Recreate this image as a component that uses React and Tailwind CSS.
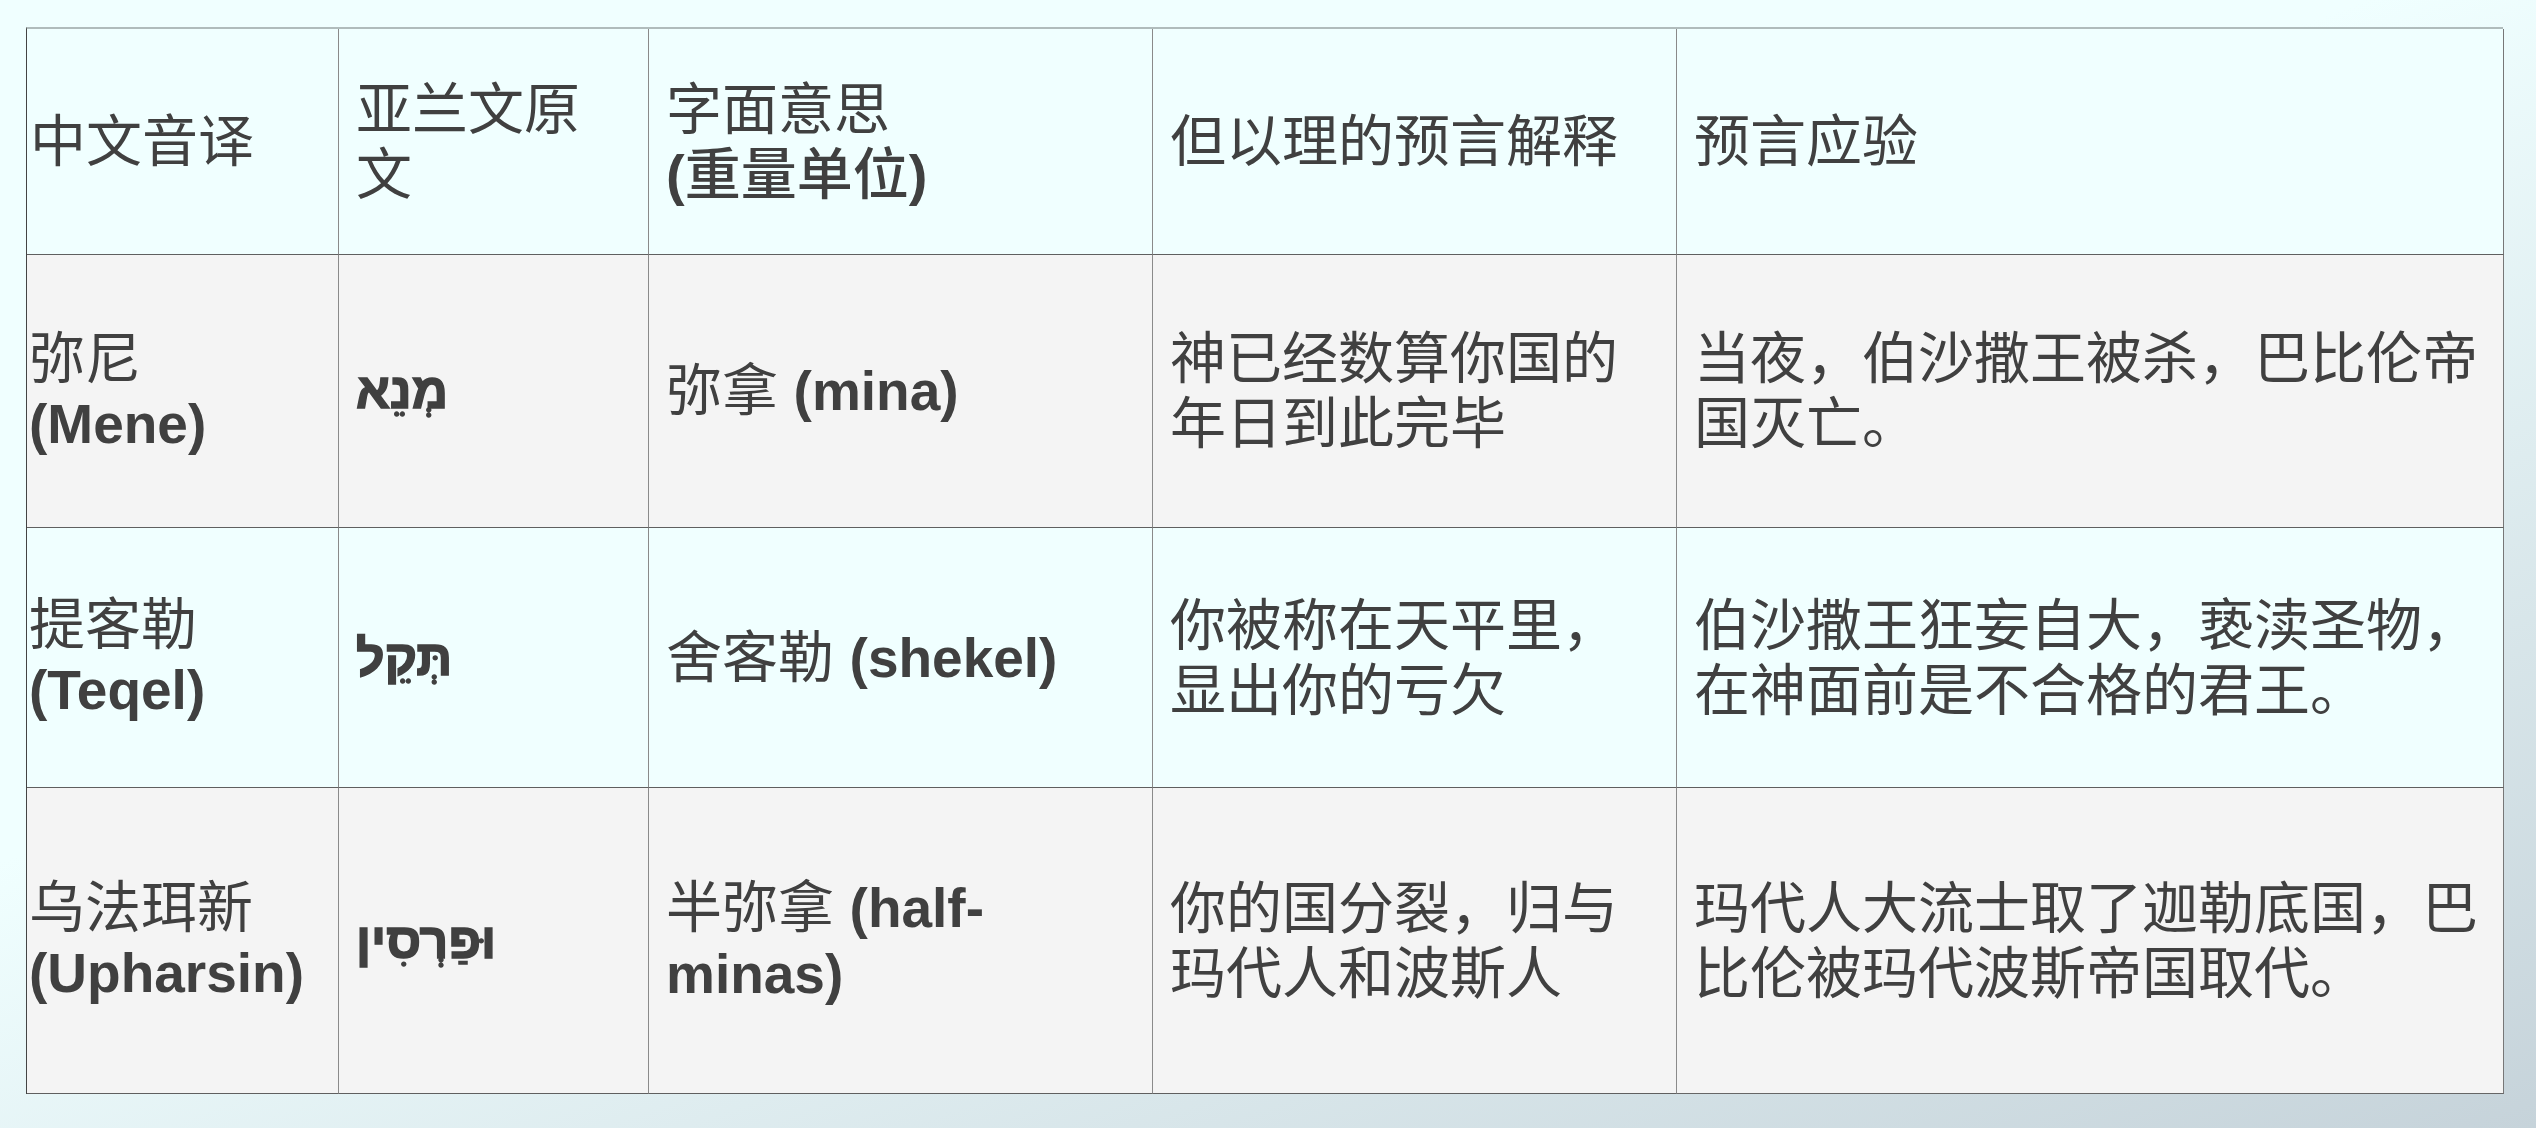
const rows = [
  {
    bg: 'bg-[#f4f4f4]',
    h: 'h-[273px]',
    name: '弥尼',
    latin: '(Mene)',
    aramaic: 'מְנֵא',
    meaning: <>弥拿 <b className="text-[55px]">(mina)</b></>,
    interp: '神已经数算你国的年日到此完毕',
    fulfil: '当夜，伯沙撒王被杀，巴比伦帝国灭亡。',
  },
  {
    bg: 'bg-[#f0ffff]',
    h: 'h-[260px]',
    name: '提客勒',
    latin: '(Teqel)',
    aramaic: 'תְּקֵל',
    meaning: <>舍客勒 <b className="text-[55px]">(shekel)</b></>,
    interp: '你被称在天平里，显出你的亏欠',
    fulfil: '伯沙撒王狂妄自大，亵渎圣物，在神面前是不合格的君王。',
  },
  {
    bg: 'bg-[#f4f4f4]',
    h: 'h-[306px]',
    name: '乌法珥新',
    latin: '(Upharsin)',
    aramaic: 'וּפַרְסִין',
    meaning: <>半弥拿 <b className="text-[55px]">(half-minas)</b></>,
    interp: '你的国分裂，归与玛代人和波斯人',
    fulfil: '玛代人大流士取了迦勒底国，巴比伦被玛代波斯帝国取代。',
  },
];

const cell = 'flex items-center border-r border-r-[#8a8a8a] border-b border-b-[#5f5f5f] pl-[17px] pr-[18px]';

export default function App() {
  return (
    <div
      className="w-[2536px] h-[1128px] overflow-hidden bg-[linear-gradient(160deg,#f0ffff_0%,#f0ffff_42%,#c6d3da_100%)] pt-[27px] pl-[26px] text-[#404040] text-[56px] leading-[65px]"
      style={{ fontFamily: '"Liberation Sans", "Noto Sans CJK SC", sans-serif' }}
    >
      <div className="grid w-[2477px] grid-cols-[312px_310px_504px_524px_827px] border-t-2 border-t-[#b0bcbc] border-l border-l-[#444]">
        {/* header */}
        <div className={`${cell} h-[226px] bg-[#f0ffff] !pl-[3px]`}>中文音译</div>
        <div className={`${cell} h-[226px] bg-[#f0ffff]`}>亚兰文原文</div>
        <div className={`${cell} h-[226px] bg-[#f0ffff]`}>
          <div>
            字面意思
            <br />
            <span className="font-medium">
              <b>(</b>重量单位<b>)</b>
            </span>
          </div>
        </div>
        <div className={`${cell} h-[226px] bg-[#f0ffff]`}>但以理的预言解释</div>
        <div className={`${cell} h-[226px] bg-[#f0ffff] border-r-[#777]`}>预言应验</div>

        {rows.map((r, i) => (
          <div key={i} className="contents">
            <div className={`${cell} ${r.h} ${r.bg} !pl-[2px]`}>
              <div>
                {r.name}
                <br />
                <b className="text-[55px]">{r.latin}</b>
              </div>
            </div>
            <div className={`${cell} ${r.h} ${r.bg}`}>
              <span
                className="font-bold text-[50px] leading-[60px] [-webkit-text-stroke:1.5px_#404040]"
                style={{ fontFamily: '"Liberation Sans", "DejaVu Sans", sans-serif' }}
              >
                {r.aramaic}
              </span>
            </div>
            <div className={`${cell} ${r.h} ${r.bg}`}>
              <div>{r.meaning}</div>
            </div>
            <div className={`${cell} ${r.h} ${r.bg}`}>
              <div>{r.interp}</div>
            </div>
            <div className={`${cell} ${r.h} ${r.bg} border-r-[#777] ${i === 2 ? 'border-b-[#666]' : ''}`}>
              <div>{r.fulfil}</div>
            </div>
          </div>
        ))}
      </div>
    </div>
  );
}
